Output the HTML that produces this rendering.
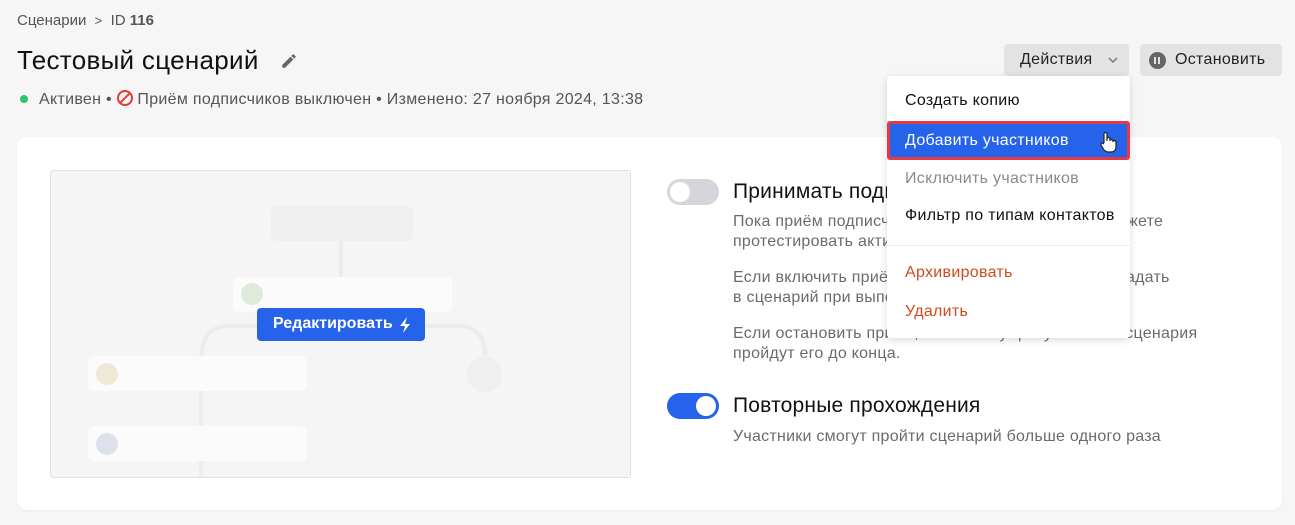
<!DOCTYPE html>
<html><head><meta charset="utf-8"><style>
*{box-sizing:border-box;margin:0;padding:0}
body{width:1295px;height:525px;background:#f6f6f6;font-family:"Liberation Sans","Noto Sans CJK SC",sans-serif;position:relative;overflow:hidden;color:#111}
.a{position:absolute;white-space:nowrap}
.card{position:absolute;left:17px;top:137px;width:1265px;height:373px;background:#fff;border-radius:10px;box-shadow:0 1px 2px rgba(0,0,0,.05)}
.prev{position:absolute;left:50px;top:170px;width:581px;height:308px;background:#f5f5f5;border:1px solid #e0e0e0;border-radius:3px;overflow:hidden}
.r{position:absolute;background:#fbfbfb;border-radius:6px}
.desc{font-size:16px;letter-spacing:0.25px;color:#6b6b6b;line-height:20px}
.tg{position:absolute;width:52px;height:26px;border-radius:13px}
.tg i{position:absolute;top:3px;width:20px;height:20px;border-radius:50%;background:#fff}
.btn{position:absolute;top:44px;height:32px;background:#e3e3e3;border-radius:4px;font-size:16px;letter-spacing:0.3px;color:#222}
.menu{position:absolute;left:887px;top:76px;width:243px;height:262px;background:#fff;border-radius:4px;box-shadow:0 2px 8px rgba(0,0,0,.15);font-size:16px;letter-spacing:0.3px}
.mi{position:absolute;left:18px}
</style></head><body>
<div class="a" style="left:17px;top:12px;font-size:15px;color:#555">Сценарии&nbsp;&nbsp;<span style="font-size:13px">&gt;</span>&nbsp;&nbsp;ID<b style="font-weight:600;color:#555"> 116</b></div>
<div class="a" style="left:17px;top:45px;font-size:26px;letter-spacing:0.3px;color:#111">Тестовый сценарий</div>
<svg class="a" style="left:280px;top:52px" width="18" height="18" viewBox="0 0 24 24"><path d="M3 17.25V21h3.75L17.8 9.94l-3.75-3.75L3 17.25zM20.7 7.04a1 1 0 000-1.41l-2.34-2.34a1 1 0 00-1.41 0l-1.83 1.83 3.75 3.75 1.83-1.83z" fill="#666"/></svg>
<div class="a" style="left:20px;top:95px;width:8px;height:8px;border-radius:50%;background:#2fc46a"></div>
<div class="a" style="left:39px;top:90px;font-size:16px;letter-spacing:0.3px;color:#555">Активен • <span style="display:inline-block;width:16px;height:16px;border:2px solid #e53935;border-radius:50%;vertical-align:-2px;position:relative"><span style="position:absolute;left:5px;top:-1px;width:2px;height:14px;background:#e53935;transform:rotate(45deg)"></span></span> Приём подписчиков выключен • Изменено: 27 ноября 2024, 13:38</div>
<div class="btn" style="left:1004px;width:125px"><span class="a" style="left:16px;top:7px">Действия</span><svg class="a" style="left:104px;top:12px" width="10" height="8" viewBox="0 0 10 8"><path d="M1 2l4 4 4-4" stroke="#777" stroke-width="1.5" fill="none"/></svg></div>
<div class="btn" style="left:1140px;width:142px"><span class="a" style="left:9px;top:8px;width:17px;height:17px;border-radius:50%;background:#666"><i style="position:absolute;left:5px;top:5px;width:2px;height:7px;background:#e3e3e3"></i><i style="position:absolute;left:9px;top:5px;width:2px;height:7px;background:#e3e3e3"></i></span><span class="a" style="left:35px;top:7px">Остановить</span></div>
<div class="card"></div>
<div class="prev">
<svg class="a" style="left:0;top:0" width="581" height="308"><g stroke="#ececec" stroke-width="4" fill="none"><path d="M290 70V106"/><path d="M210 155H175Q150 157 150 190V300Q150 315 165 320"/><path d="M373 155H410Q434 157 434 185"/></g></svg>
<div class="r" style="left:220px;top:35px;width:142px;height:35px;background:#efefef"></div>
<div class="r" style="left:182px;top:106px;width:219px;height:35px"></div>
<div class="a" style="left:190px;top:112px;width:22px;height:22px;border-radius:50%;background:#e0eadb"></div>
<div class="r" style="left:37px;top:185px;width:219px;height:35px"></div>
<div class="a" style="left:45px;top:192px;width:22px;height:22px;border-radius:50%;background:#efe8d6"></div>
<div class="r" style="left:37px;top:255px;width:219px;height:35px"></div>
<div class="a" style="left:45px;top:262px;width:22px;height:22px;border-radius:50%;background:#dde1ec"></div>
<div class="a" style="left:416px;top:186px;width:35px;height:35px;border-radius:50%;background:#efefef"></div>
<div class="a" style="left:206px;top:137px;width:168px;height:33px;background:#2563eb;border-radius:4px;color:#fff;font-size:16px;font-weight:600"><span class="a" style="left:16px;top:7px">Редактировать</span><svg class="a" style="left:141px;top:8px" width="14" height="18" viewBox="0 0 14 18"><path d="M9 1L2 10h5l-2 7 7-9H7z" fill="#fff"/></svg></div>
</div>
<div class="tg" style="left:667px;top:179px;background:#d4d6db"><i style="left:3px"></i></div>
<div class="a" style="left:733px;top:180px;font-size:21px;letter-spacing:0.2px">Принимать подписчиков</div>
<div class="a desc" style="left:733px;top:212px">Пока приём подписчиков выключен, вы всё ещё можете<br>протестировать активацию сценария</div>
<div class="a desc" style="left:733px;top:268px">Если включить приём, подписчики смогут сами попадать<br>в сценарий при выполнении условий</div>
<div class="a desc" style="left:733px;top:324px">Если остановить приём, то все текущие участники сценария<br>пройдут его до конца.</div>
<div class="tg" style="left:667px;top:393px;background:#2563eb"><i style="left:29px"></i></div>
<div class="a" style="left:733px;top:394px;font-size:21px;letter-spacing:0.2px">Повторные прохождения</div>
<div class="a desc" style="left:733px;top:427px">Участники смогут пройти сценарий больше одного раза</div>
<div class="menu">
<div class="a mi" style="top:16px">Создать копию</div>
<div class="a" style="left:0;top:45px;width:243px;height:39px;background:#2563eb;border:3px solid #e53945;border-radius:3px;color:#fff"><span class="a" style="left:15px;top:8px">Добавить участников</span><svg class="a" style="left:209px;top:7px" width="18" height="22" viewBox="0 0 18 22"><path d="M5 11V3a1.5 1.5 0 013 0v7V8a1.5 1.5 0 013 0v2a1.5 1.5 0 013 0v1a1.5 1.5 0 013 0v5c0 3-2 5-5 5H9c-2 0-3-1-4-2l-3-5a1.5 1.5 0 012.5-1.5z" fill="#fff" stroke="#222" stroke-width="1.2"/></svg></div>
<div class="a mi" style="top:94px;color:#8a8a8a">Исключить участников</div>
<div class="a mi" style="top:131px">Фильтр по типам контактов</div>
<div class="a" style="left:0;top:169px;width:243px;height:1px;background:#eee"></div>
<div class="a mi" style="top:188px;color:#d2491d">Архивировать</div>
<div class="a mi" style="top:227px;color:#d2491d">Удалить</div>
</div>
</body></html>
